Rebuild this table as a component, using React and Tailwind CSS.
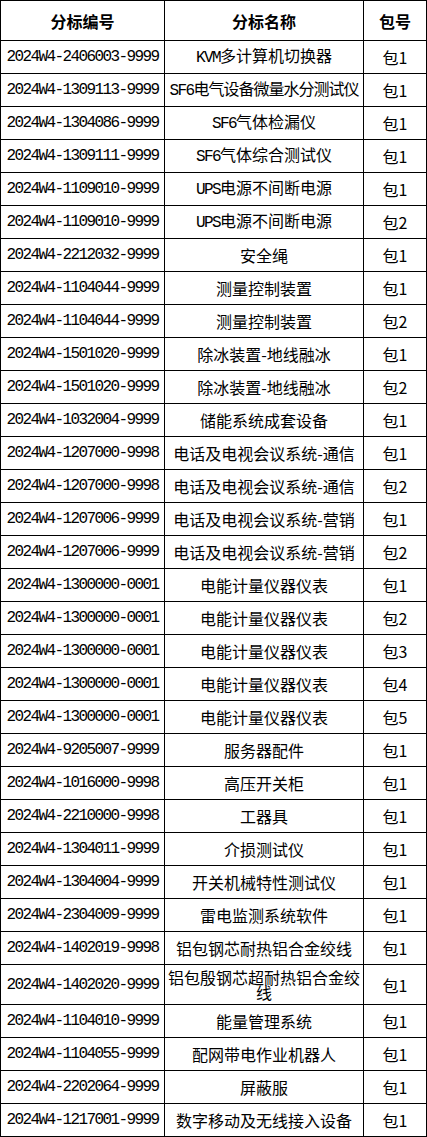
import React from 'react'

// rows of the table: [分标编号, 分标名称, 包号]
const ROWS = [
  ['2024W4-2406003-9999', 'KVM多计算机切换器', '包1'],
  ['2024W4-1309113-9999', 'SF6电气设备微量水分测试仪', '包1'],
  ['2024W4-1304086-9999', 'SF6气体检漏仪', '包1'],
  ['2024W4-1309111-9999', 'SF6气体综合测试仪', '包1'],
  ['2024W4-1109010-9999', 'UPS电源不间断电源', '包1'],
  ['2024W4-1109010-9999', 'UPS电源不间断电源', '包2'],
  ['2024W4-2212032-9999', '安全绳', '包1'],
  ['2024W4-1104044-9999', '测量控制装置', '包1'],
  ['2024W4-1104044-9999', '测量控制装置', '包2'],
  ['2024W4-1501020-9999', '除冰装置-地线融冰', '包1'],
  ['2024W4-1501020-9999', '除冰装置-地线融冰', '包2'],
  ['2024W4-1032004-9999', '储能系统成套设备', '包1'],
  ['2024W4-1207000-9998', '电话及电视会议系统-通信', '包1'],
  ['2024W4-1207000-9998', '电话及电视会议系统-通信', '包2'],
  ['2024W4-1207006-9999', '电话及电视会议系统-营销', '包1'],
  ['2024W4-1207006-9999', '电话及电视会议系统-营销', '包2'],
  ['2024W4-1300000-0001', '电能计量仪器仪表', '包1'],
  ['2024W4-1300000-0001', '电能计量仪器仪表', '包2'],
  ['2024W4-1300000-0001', '电能计量仪器仪表', '包3'],
  ['2024W4-1300000-0001', '电能计量仪器仪表', '包4'],
  ['2024W4-1300000-0001', '电能计量仪器仪表', '包5'],
  ['2024W4-9205007-9999', '服务器配件', '包1'],
  ['2024W4-1016000-9998', '高压开关柜', '包1'],
  ['2024W4-2210000-9998', '工器具', '包1'],
  ['2024W4-1304011-9999', '介损测试仪', '包1'],
  ['2024W4-1304004-9999', '开关机械特性测试仪', '包1'],
  ['2024W4-2304009-9999', '雷电监测系统软件', '包1'],
  ['2024W4-1402019-9998', '铝包钢芯耐热铝合金绞线', '包1'],
  ['2024W4-1402020-9999', '铝包殷钢芯超耐热铝合金绞线', '包1', true],
  ['2024W4-1104010-9999', '能量管理系统', '包1'],
  ['2024W4-1104055-9999', '配网带电作业机器人', '包1'],
  ['2024W4-2202064-9999', '屏蔽服', '包1'],
  ['2024W4-1217001-9999', '数字移动及无线接入设备', '包1'],
]

const mono = "font-['Liberation_Mono',monospace] tracking-[-1.6px]"

// split a leading latin prefix (KVM, SF6, UPS) so it gets the narrow mono face
function Name({ text }) {
  const m = text.match(/^([A-Za-z0-9]+)(.*)$/)
  if (!m) return text
  return (
    <>
      <span className={mono}>{m[1]}</span>
      {m[2]}
    </>
  )
}

export default function App() {
  return (
    <div className="w-[427px] bg-white text-black text-[16px] leading-[16px] font-['Noto_Sans_CJK_SC',sans-serif]">
      {/* header */}
      <div className="flex h-[41px] border-y border-l border-black font-bold">
        <div className="w-[164px] border-r border-black flex items-center justify-center">分标编号</div>
        <div className="w-[199px] border-r border-black flex items-center justify-center">分标名称</div>
        <div className="w-[63px] border-r border-black flex items-center justify-center">包号</div>
      </div>

      {ROWS.map(([code, name, pkg, tall], i) => (
        <div key={i} className={`flex border-b border-l border-black ${tall ? 'h-[40px]' : 'h-[33px]'}`}>
          <div className={`w-[164px] border-r border-black flex items-center justify-center whitespace-nowrap ${mono}`}>
            {code}
          </div>
          <div
            className={`w-[199px] border-r border-black flex items-center justify-center text-center leading-[15px] ${
              tall ? '' : 'whitespace-nowrap'
            } ${!tall && name.length >= 13 ? 'tracking-[-1px]' : ''}`}
          >
            <div>
              <Name text={name} />
            </div>
          </div>
          <div className="w-[63px] border-r border-black flex items-center justify-center">
            {pkg}
          </div>
        </div>
      ))}
    </div>
  )
}
